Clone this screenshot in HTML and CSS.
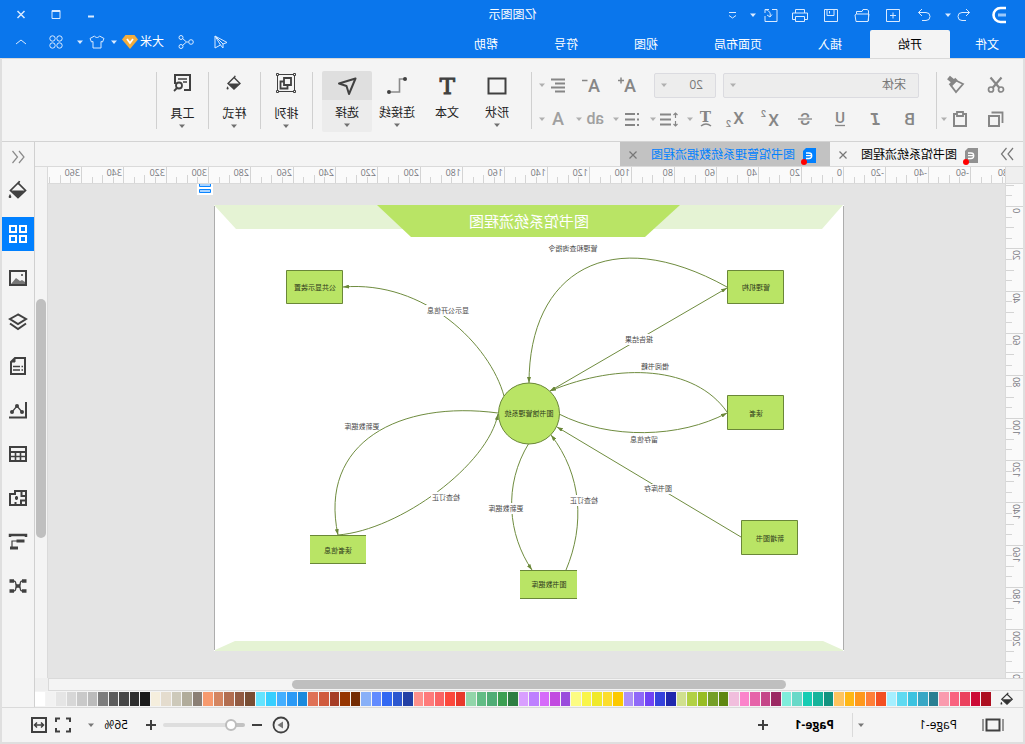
FILE: index.html
```html
<!DOCTYPE html>
<html lang="zh-CN">
<head>
<meta charset="utf-8">
<title>亿图图示</title>
<link rel="stylesheet" href="styles.css">
</head>
<body>
<svg class="sprite" aria-hidden="true">
  <symbol id="caret" viewBox="0 0 8 8"><path d="M1 2.500h6L4 6z" fill="currentColor"/></symbol>
  <symbol id="bucket" viewBox="0 0 20 20"><path d="M8.500 1l1.500 3.500M10 3l7.500 7.500-7.500 7-7.500-7z" fill="none" stroke="currentColor" stroke-width="1.700"/><path d="M3 10.500h14l-7 7z" fill="currentColor"/><path d="M18 14c2 3 1.500 4 0 4s-2-1 0-4z" fill="currentColor"/></symbol>
  <symbol id="doc" viewBox="0 0 13 15"><path d="M0 0h10l3 3v12H0z" fill="currentColor"/><path d="M10 5H7a2.500 2.500 0 0 0 0 5.500h3M5 7.700h5" fill="none" stroke="#fff" stroke-width="1.300"/></symbol>
  <symbol id="close" viewBox="0 0 10 10"><path d="M1.500 1.500l7 7M8.500 1.500l-7 7" stroke="currentColor" stroke-width="1.200"/></symbol>
</svg>

<div class="app">
  <header class="titlebar">
    <div class="title-row">
      <div class="quick">
        <svg class="logo" viewBox="0 0 16 18"><path d="M1 2h5.500a7 7 0 0 1 0 14H1" fill="none" stroke="#fff" stroke-width="2.600"/><path d="M1 9h8" stroke="#9cc8fa" stroke-width="3"/></svg>
        <button class="q first" aria-label="撤销"><svg class="i16" viewBox="0 0 16 16"><path d="M6 2L2.500 5.500 6 9M2.500 5.500H10a4 4 0 0 1 0 8H6"/></svg></button>
        <button class="drop" aria-label="撤销列表"><svg><use href="#caret"/></svg></button>
        <button class="q redo" aria-label="重做"><svg class="i16" viewBox="0 0 16 16"><path d="M10 2l3.500 3.500L10 9M13.500 5.500H6a4 4 0 0 0 0 8h4"/></svg></button>
        <button class="q" aria-label="新建"><svg class="i16" viewBox="0 0 16 16"><path d="M1.500 2.500h13v12h-13zM8 5.500v6M5 8.500h6"/></svg></button>
        <button class="q" aria-label="打开"><svg class="i16" viewBox="0 0 16 16"><path d="M1.500 14V3.500l1.500-1h4l1 2h5.500V7M1 7h12.500l1.500 1-1 6.500H2z"/></svg></button>
        <button class="q" aria-label="保存"><svg class="i16" viewBox="0 0 16 16"><path d="M1.500 2.500h13v12h-13zM5 2.500v6h7v-6M9.500 4v2.500"/></svg></button>
        <button class="q" aria-label="打印"><svg class="i16" viewBox="0 0 16 16"><path d="M3.500 6V2.500h9V6M3.500 12.500h-3V6h15v6.500h-3M3.500 9.500h9v5h-9z"/></svg></button>
        <button class="q export" aria-label="导出"><svg class="i16" viewBox="0 0 16 16"><path d="M7 2.500H2v12h12V9M14 6V2.500h-4M14 2.500c-4 1-6 3-5 7M7 7.500l2 2.500 3-2"/></svg></button>
        <button class="drop" aria-label="导出选项"><svg><use href="#caret"/></svg></button>
        <button class="q more" aria-label="更多"><svg class="i16" viewBox="0 0 16 16"><path d="M5 5.500h7M5 8.500L8.500 11 12 8.500"/></svg></button>
      </div>
      <h1>亿图图示</h1>
      <div class="window">
        <button aria-label="最小化"><svg class="i16" viewBox="0 0 16 16"><path d="M5 9.500h6" stroke-width="2"/></svg></button>
        <button aria-label="最大化"><svg class="i16" viewBox="0 0 16 16"><path d="M4 3.500h8v8H4zM4 4.500h8"/></svg></button>
        <button aria-label="关闭"><svg class="i16" viewBox="0 0 16 16"><path d="M4.500 4l7 7M11.500 4l-7 7" stroke-width="1.500"/></svg></button>
      </div>
    </div>
    <div class="menu-row">
      <nav class="menu">
        <a class="file" href="#file">文件</a><a class="active" href="#home">开始</a><a href="#insert">插入</a><a href="#layout">页面布局</a><a href="#view">视图</a><a href="#symbol">符号</a><a href="#help">帮助</a>
      </nav>
      <div class="account">
        <button class="wide" aria-label="发送"><svg class="i16" viewBox="0 0 16 16"><path d="M14 2L2 8.500l4 1.500zM14 2l-8 8v4l2.500-3M14 2v12l-5.500-3z"/></svg></button>
        <button class="wide" aria-label="分享"><svg class="i16" viewBox="0 0 16 16"><circle cx="3" cy="8" r="2.300"/><circle cx="13" cy="3.500" r="2"/><circle cx="13" cy="12.500" r="2"/><path d="M5.500 8h2l4-3.500M7.500 8l4 3.500"/></svg></button>
        <button class="user">大米<svg class="gem" viewBox="0 0 16 14"><path d="M3.500 0h9L16 4.500 8 14 0 4.500z" fill="#f3ad3d"/><path d="M5 4l3 4 3-4" fill="none" stroke="#fff" stroke-width="1.800"/></svg></button>
        <button class="drop" aria-label="账户选项"><svg><use href="#caret"/></svg></button>
        <button class="shirt" aria-label="主题"><svg class="i16" viewBox="0 0 16 16"><path d="M5.500 2L1 4.500 2.500 8 4 7.500V14h8V7.500l1.500.5L15 4.500 10.500 2c-1 2-4 2-5 0z"/></svg></button>
        <button class="drop" aria-label="主题选项"><svg><use href="#caret"/></svg></button>
        <button class="wide apps" aria-label="应用"><svg class="i16" viewBox="0 0 16 16"><circle cx="4.500" cy="4.500" r="2.700"/><circle cx="11.500" cy="4.500" r="2.700"/><circle cx="4.500" cy="11.500" r="2.700"/><circle cx="11.500" cy="11.500" r="2.700"/></svg></button>
        <button class="wide" aria-label="收起"><svg class="i16" viewBox="0 0 16 16"><path d="M3 10l5-4 5 4"/></svg></button>
      </div>
    </div>
  </header>

  <div class="frame">
    <section class="ribbon" aria-label="开始">
      <div class="tools clipboard">
        <div class="tool-row">
          <button class="t32" aria-label="剪切"><svg class="i18" viewBox="0 0 18 18"><path d="M3.500 1.500l9 10.500M14.500 1.500L5.500 12" stroke-width="2.200"/><circle cx="4" cy="13.500" r="2.500" stroke-width="1.700"/><circle cx="14" cy="13.500" r="2.500" stroke-width="1.700"/></svg></button>
          <button class="t32" aria-label="格式刷"><svg class="i18" viewBox="0 0 18 18"><path d="M2 8l7-3.500 5 5L9 16z" stroke-width="1.800"/><path d="M11 6l5.500-4.500" stroke-width="4.500"/><path d="M8.500 3L15 9.500" stroke-width="3.500"/></svg></button>
        </div>
        <div class="tool-row">
          <button class="t32" aria-label="复制"><svg class="i18" viewBox="0 0 18 18"><path d="M2.500 13V2.500h11" stroke-width="1.800"/><path d="M6 6h10v10H6z" stroke-width="2"/></svg></button>
          <button class="t24" aria-label="粘贴"><svg class="i18" viewBox="0 0 18 18"><path d="M3 4h12v12H3z" stroke-width="2"/><path d="M6 2h6v4H6z" fill="#f4f4f4" stroke-width="1.800"/></svg></button>
          <button class="drop" aria-label="粘贴选项"><svg><use href="#caret"/></svg></button>
        </div>
      </div>
      <span class="sep"></span>
      <div class="tools font">
        <div class="tool-row fields">
          <label class="field family"><select aria-label="字体"><option>宋体</option></select><svg><use href="#caret"/></svg></label>
          <label class="field size"><select aria-label="字号"><option>20</option></select><svg><use href="#caret"/></svg></label>
          <div class="case">
            <button class="t36" aria-label="增大字号"><svg class="i18" viewBox="0 0 18 18"><text class="glyph" x="0" y="16" font-size="18">A</text><path d="M12 4.500h6M15 1.500v6" stroke-width="1.500"/></svg></button>
            <button class="t36" aria-label="减小字号"><svg class="i18" viewBox="0 0 18 18"><text class="glyph" x="0" y="16" font-size="18">A</text><path d="M12.500 4.500H18" stroke-width="1.500"/></svg></button>
          </div>
          <div class="combo"><button class="t24" aria-label="对齐"><svg class="i18" viewBox="0 0 18 18"><path d="M2 3.500h14M2 7.500h10M2 11.500h14M2 15.500h10" stroke-width="1.800"/></svg></button><button class="drop" aria-label="对齐选项"><svg><use href="#caret"/></svg></button></div>
        </div>
        <div class="tool-row styles">
          <button class="t35" aria-label="加粗"><svg class="i18" viewBox="0 0 18 18"><text class="glyph" x="4" y="15" font-size="17">B</text></svg></button>
          <button class="t35" aria-label="斜体"><svg class="i18" viewBox="0 0 18 18"><text class="glyph mono" x="4" y="15" font-size="16">I</text></svg></button>
          <button class="t35" aria-label="下划线"><svg class="i18" viewBox="0 0 18 18"><text class="glyph" x="4" y="13" font-size="15">U</text><path d="M4 15.500h10" stroke-width="1.300"/></svg></button>
          <button class="t35" aria-label="删除线"><svg class="i18" viewBox="0 0 18 18"><text class="glyph" x="4" y="15" font-size="16">S</text><path d="M2 9h14" stroke="#f4f4f4" stroke-width="3"/><path d="M2 9h14" stroke-width="1.300"/></svg></button>
          <button class="t35" aria-label="上标"><svg class="i18" viewBox="0 0 18 18"><text class="glyph" x="0" y="16" font-size="17">X</text><text class="glyph" x="13" y="7" font-size="9">2</text></svg></button>
          <button class="t35" aria-label="下标"><svg class="i18" viewBox="0 0 18 18"><text class="glyph" x="0" y="14" font-size="17">X</text><text class="glyph" x="13" y="17" font-size="9">2</text></svg></button>
          <div class="combos">
            <div class="combo"><button class="t24" aria-label="文字效果"><svg class="i18" viewBox="0 0 18 18"><text class="glyph serif" x="4" y="12" font-size="15">T</text><path d="M4 16q5-4 10 0" stroke-width="1.600"/></svg></button><button class="drop" aria-label="文字效果选项"><svg><use href="#caret"/></svg></button></div>
            <div class="combo"><button class="t24" aria-label="行距"><svg class="i18" viewBox="0 0 18 18"><path d="M7 4.500h11M7 9.500h11M7 14.500h11" stroke-width="1.800"/><path d="M2.500 3v5M.5 5l2-2 2 2M2.500 11v5M.5 14l2 2 2-2" stroke-width="1.200"/></svg></button><button class="drop" aria-label="行距选项"><svg><use href="#caret"/></svg></button></div>
            <div class="combo"><button class="t24" aria-label="项目符号"><svg class="i18" viewBox="0 0 18 18"><path d="M2 4h2M2 9.500h2M2 15h2M6 4h10M6 9.500h10M6 15h10" stroke-width="1.800"/></svg></button><button class="drop" aria-label="项目符号选项"><svg><use href="#caret"/></svg></button></div>
            <div class="combo faint"><button class="t24" aria-label="突出显示"><svg class="i18" viewBox="0 0 18 18"><text class="glyph" x="0" y="14" font-size="16">ab</text></svg></button><button class="drop" aria-label="突出显示选项"><svg><use href="#caret"/></svg></button></div>
            <div class="combo faint"><button class="t24" aria-label="字体颜色"><svg class="i18" viewBox="0 0 18 18"><text class="glyph" x="3" y="15" font-size="18">A</text></svg></button><button class="drop" aria-label="字体颜色选项"><svg><use href="#caret"/></svg></button></div>
          </div>
        </div>
      </div>
      <span class="sep"></span>
      <div class="bigs">
        <button class="big"><svg class="i24" viewBox="0 0 24 24"><path d="M3.500 4.500h17v15h-17z" stroke-width="2"/></svg><span>形状</span><svg class="car"><use href="#caret"/></svg></button>
        <button class="big"><svg class="i24" viewBox="0 0 24 24"><text class="glyph serif thick" x="4" y="20" font-size="23">T</text></svg><span>文本</span></button>
        <button class="big"><svg class="i24" viewBox="0 0 24 24"><path d="M5 5h4.500v13H18" stroke="#8a8a8a" stroke-width="1.600"/><circle cx="4" cy="5" r="2" class="dot"/><circle cx="20" cy="18" r="2" class="dot"/></svg><span>连接线</span><svg class="car"><use href="#caret"/></svg></button>
        <button class="big on"><svg class="i24" viewBox="0 0 24 24"><path d="M3.500 4.500L20 9.500l-7.500 2.500L10 20z" stroke-width="2" stroke-linejoin="round"/></svg><span>选择</span><svg class="car"><use href="#caret"/></svg></button>
      </div>
      <span class="sep"></span>
      <button class="group"><svg class="i24" viewBox="0 0 24 24"><path d="M3.500 3.500h17v17h-17z" stroke-width="1"/><path d="M7 7h7v7H7zM14.500 10.500H17.500V17.500h-7v-3" stroke-width="1.800"/><path class="hollow" d="M2.500 2.500h2v2h-2zM19.500 2.500h2v2h-2zM2.500 19.500h2v2h-2zM19.500 19.500h2v2h-2z" stroke-width="1"/></svg><span>排列</span><svg class="car"><use href="#caret"/></svg></button>
      <span class="sep"></span>
      <button class="group"><svg class="i16 paint"><use href="#bucket"/></svg><span>样式</span><svg class="car"><use href="#caret"/></svg></button>
      <span class="sep"></span>
      <button class="group"><svg class="i20" viewBox="0 0 20 20"><path d="M8 17H2V2h15v9" stroke-width="2"/><path d="M5 6h9M5 9h4" stroke-width="1.500"/><circle cx="13" cy="12.500" r="3" stroke-width="1.800"/><path d="M15 15l3 3" stroke-width="1.800"/></svg><span>工具</span><svg class="car"><use href="#caret"/></svg></button>
      <span class="sep"></span>
    </section>

    <div class="work">
      <main>
        <div class="doc-tabs">
          <button class="expand" aria-label="展开"><svg class="i16" viewBox="0 0 16 16"><path d="M2 2l5 6-5 6M8.500 2l5 6-5 6" stroke-width="1.200"/></svg></button>
          <div class="doc-tab"><span class="file-icon"><svg><use href="#doc"/></svg></span><a href="#doc1">图书馆系统流程图</a><button aria-label="关闭标签"><svg><use href="#close"/></svg></button></div>
          <div class="doc-tab current"><span class="file-icon"><svg><use href="#doc"/></svg></span><a href="#doc2">图书馆管理系统数据流程图</a><button aria-label="关闭标签"><svg><use href="#close"/></svg></button></div>
        </div>
        <div class="sheet">
          <div class="corner"></div>
          <svg class="ruler-h" id="ruler-h"></svg>
          <div class="scroll-v"><i></i></div>
          <svg class="ruler-v" id="ruler-v"></svg>
          <div class="canvas">
            <svg class="page" viewBox="181 205 630 446" role="img" aria-label="图书馆系统流程图">
              <defs><marker id="arrow" viewBox="0 0 6 4" refX="6" refY="2" markerWidth="6" markerHeight="4" orient="auto-start-reverse"><path d="M0 0l6 2-6 2z" fill="#6a8738"/></marker></defs>
              <path d="M181 205h630v446h-630z" fill="#fff"/>
              <path d="M181.500 206v444M810.500 206v444" stroke="#adadad"/>
              <path d="M182 205h629l-22 24H203z" fill="#e5f3d4"/>
              <path d="M345 205h303l-34 32H380z" fill="#b9e465"/>
              <path d="M182 650l20-9h588l20 9v1H182z" fill="#e5f3d4"/>
              <text class="heading" x="496" y="227">图书馆系统流程图</text>
              <g class="edges">
                <path d="M298 287C415 222 496 272 496 383" marker-end="url(#arrow)"/>
                <path d="M298 288L475 391" marker-start="url(#arrow)" marker-end="url(#arrow)"/>
                <path d="M298 412C330 366 405 362 475 391" marker-end="url(#arrow)"/>
                <path d="M466 414C415 440 345 438 298 413" marker-end="url(#arrow)"/>
                <path d="M284 537L468 427" marker-end="url(#arrow)"/>
                <path d="M496 443C522 485 517 535 493 570" marker-end="url(#arrow)"/>
                <path d="M459 570C440 525 443 475 474 435" marker-end="url(#arrow)"/>
                <path d="M527 413C625 400 707 442 687 535" marker-end="url(#arrow)"/>
                <path d="M687 535C625 530 537 465 527 414" marker-end="url(#arrow)"/>
                <path d="M521 396C535 345 600 280 682 287" marker-end="url(#arrow)"/>
              </g>
              <g class="shapes">
                <path d="M241.500 270.500h56v33h-56zM241.500 395.500h56v34h-56zM227.500 520.500h56v34h-56zM682.500 270.500h56v33h-56z"/>
                <circle cx="496" cy="413.500" r="30.500"/>
                <path class="bare" d="M659 535h56v29h-56zM448 570h57v29h-57z"/>
                <path d="M659 535.500h56M659 563.500h56M448 570.500h57M448 598.500h57"/>
              </g>
              <g fill="#fff"><path d="M555 305h44v11h-44zM371 334h30v11h-30zM353 484h30v10h-30zM500 503h38v11h-38zM564 492h30v11h-30zM426 495h30v11h-30z"/></g>
              <g class="labels">
                <text x="452" y="251">管理和查询指令</text>
                <text x="577" y="313">显示公开信息</text>
                <text x="386" y="342">报告结果</text>
                <text x="370" y="369">借阅书籍</text>
                <text x="381" y="442">留存信息</text>
                <text x="367" y="491">图书库存</text>
                <text x="663" y="429">更新数据库</text>
                <text x="519" y="511">更新数据库</text>
                <text x="579" y="500">检查订正</text>
                <text x="441" y="503">检查订正</text>
              </g>
              <g class="labels node">
                <text x="269" y="290">管理机构</text>
                <text x="269" y="416">读者</text>
                <text x="255" y="541">新增图书</text>
                <text x="710" y="290">公共显示装置</text>
                <text x="496" y="416">图书馆管理系统</text>
                <text x="687" y="553">读者信息</text>
                <text x="476" y="587">图书数据库</text>
              </g>
            </svg>
            <svg class="handle" viewBox="0 0 16 11"><path d="M0 0h16v11H0z" fill="#fff"/><path d="M2.500-2h11v4.500h-11zM2.500 5.500h11v3h-11z" fill="#a8d3ff" stroke="#0a84ff"/></svg>
          </div>
        </div>
        <div class="scroll-h"><div class="track"><i></i></div><div class="end"></div></div>
        <div class="palette"><button aria-label="填充"><svg><use href="#bucket"/></svg></button><div class="swatches" id="swatches"></div></div>
      </main>
      <aside class="side">
        <button class="fold" aria-label="收起面板"><svg class="i16" viewBox="0 0 16 16"><path d="M7 2L2 8l5 6M13.500 2l-5 6 5 6" stroke="#8a8a8a" stroke-width="1.200"/></svg></button>
        <button aria-label="样式"><svg><use href="#bucket"/></svg></button>
        <button class="on" aria-label="符号"><svg viewBox="0 0 20 20"><path d="M2 2h6v6H2zM12 2h6v6h-6zM2 12h6v6H2zM12 12h6v6h-6z" stroke-width="2"/></svg></button>
        <button aria-label="图片"><svg viewBox="0 0 20 20"><path d="M2 3h16v14H2z" stroke-width="2"/><path d="M3 16v-2l3-2 2 1 4-3 5 6z" fill="#777" stroke="none"/><circle cx="6" cy="7" r="1" class="dot"/></svg></button>
        <button aria-label="图层"><svg viewBox="0 0 20 20"><path d="M10 2.500l8 4.500-8 5-8-5zM2 11.500l8 5.500 8-5.500" stroke-width="2"/></svg></button>
        <button aria-label="注释"><svg viewBox="0 0 20 20"><path d="M3 2h10l4 4v12H3z" stroke-width="2"/><path d="M5 10.500h1.500M8 10.500h7M5 14h1.500M8 14h7" stroke-width="1.500"/><path d="M13 2l4 4h-4z" fill="currentColor"/></svg></button>
        <button aria-label="图表"><svg viewBox="0 0 20 20"><path d="M2 2v15.500h17" stroke-width="2"/><path d="M6 12l5-6 5 6" stroke-width="1.200"/><circle cx="6" cy="12" r="2" class="dot"/><circle cx="11" cy="6" r="2" class="dot"/><circle cx="16" cy="12" r="2" class="dot"/></svg></button>
        <button aria-label="表格"><svg viewBox="0 0 20 20"><path d="M2 3h16v14H2zM2 8h16" stroke-width="2"/><path d="M2 12.500h16M7.500 8v9M12.500 8v9" stroke-width="1.600"/></svg></button>
        <button aria-label="平面图"><svg viewBox="0 0 20 20"><path d="M2 3h11v3h5v11H2zM2 8h4.500V3M2 12.500h5V17M12.500 14v3M13 10h-3M11.500 8v4" stroke-width="2"/></svg></button>
        <button aria-label="甘特图"><svg viewBox="0 0 20 20"><path d="M2 5V3h16v2" stroke-width="2.500"/><path d="M3.500 9h8M10 16h8" stroke-width="3"/><path d="M11 9h5v6" stroke-width="1.200"/></svg></button>
        <button aria-label="思维导图"><svg viewBox="0 0 20 20"><path d="M4 5c6-1 2 5 6 5s0-6 6-5M4 15c6 1 2-5 6-5s0 6 6 5" stroke-width="1.300"/><path d="M1.500 5H6M14 5h4.500M1.500 15H6M14 15h4.500M7.500 10h5" stroke-width="3.500"/></svg></button>
      </aside>
    </div>

    <footer class="status">
      <button class="pages" aria-label="页面视图"><svg viewBox="0 0 24 16"><path d="M5.500 2.500h13v11h-13z" stroke-width="2"/><path d="M2 2v12M22 2v12" stroke="#777" stroke-width="1.500"/></svg></button>
      <label class="page-pick"><select aria-label="页面"><option>Page-1</option></select><svg><use href="#caret"/></svg></label>
      <span class="bar"></span>
      <a class="page-tab" href="#page1">Page-1</a>
      <button class="s24 add" aria-label="新增页面"><svg class="i16" viewBox="0 0 16 16"><path d="M3 8h10M8 3v10" stroke-width="2"/></svg></button>
      <div class="zoom">
        <button class="s24" aria-label="放映"><svg class="i18" viewBox="0 0 18 18"><circle cx="9" cy="9" r="7.500" stroke-width="1.800"/><path d="M7 5.500l5.500 3.500L7 12.500z" fill="#777" stroke="none"/></svg></button>
        <button class="s24" aria-label="缩小"><svg class="i16" viewBox="0 0 16 16"><path d="M3 8h10" stroke-width="2"/></svg></button>
        <input type="range" min="0" max="100" value="11" aria-label="缩放">
        <button class="s24" aria-label="放大"><svg class="i16" viewBox="0 0 16 16"><path d="M3 8h10M8 3v10" stroke-width="2"/></svg></button>
        <label class="zoom-pick"><select aria-label="缩放比例"><option>56%</option></select><svg><use href="#caret"/></svg></label>
        <button class="s24" aria-label="全屏"><svg class="i18" viewBox="0 0 18 18"><path d="M2 6V2.500h4M12 2.500h4V6M2 12v3.500h4M12 15.500h4V12" stroke-width="2"/></svg></button>
        <button class="s24" aria-label="适合宽度"><svg class="i18" viewBox="0 0 18 18"><path d="M2 2h14v14H2z" stroke-width="2"/><path d="M5 9h8M7 6.500L4.500 9 7 11.500M11 6.500L13.500 9 11 11.500" stroke-width="1.500"/></svg></button>
      </div>
    </footer>
  </div>
</div>
<script src="script.js"></script>
</body>
</html>
```

FILE: styles.css
```css
* { box-sizing: border-box; }

body {
  margin: 0;
  font: 12px/16px "Open Sans", "Noto Sans CJK SC", sans-serif;
  color: #000;
}

button, select, input { font: inherit; color: inherit; margin: 0; }
button { border: 0; padding: 0; background: none; display: flex; align-items: center; justify-content: center; }
select { appearance: none; border: 0; background: none; padding: 0; outline: 0; width: 100%; }
a { color: inherit; text-decoration: none; }
svg { display: block; flex: none; fill: none; stroke: currentColor; }
svg use, .glyph { stroke: none; }
.sprite { position: absolute; width: 0; height: 0; }
.sprite [fill="currentColor"] { stroke: none; }
.dot { fill: currentColor; stroke: none; }
.hollow { fill: #f4f4f4; }
.glyph { fill: currentColor; font-family: Roboto, sans-serif; font-weight: 500; }
.glyph.serif { font-family: "DejaVu Serif", serif; font-weight: 700; }
.glyph.thick { font-weight: 400; stroke: currentColor; stroke-width: 1; }
.glyph.mono { font-family: "DejaVu Sans Mono", monospace; font-weight: 700; font-style: oblique; }
.i16 { width: 16px; height: 16px; }
.i18 { width: 18px; height: 18px; }
.i20 { width: 20px; height: 20px; }
.i24 { width: 24px; height: 24px; }
.i18, .i24 { overflow: visible; }

/* The whole window is shown as a mirror image. */
.app {
  display: flex;
  flex-direction: column;
  height: 100vh;
  overflow: hidden;
  transform: scaleX(-1);
  background: #f4f4f4;
}

.drop { width: 8px; height: 24px; }
.drop svg { width: 8px; height: 8px; }

/* title bar */
.titlebar { background: #0a76ec; color: #fff; }
.title-row { display: grid; grid-template-columns: 1fr auto 1fr; height: 30px; align-items: center; }
.title-row h1 { margin: 0; font-size: 12px; font-weight: 400; }
.quick, .window, .account, .menu { display: flex; align-items: center; }
.quick { padding-left: 18px; }
.titlebar button { color: #d9eaff; height: 24px; }
.logo { width: 16px; height: 18px; }
.q { width: 31px; }
.q.first { width: 24px; margin-left: 15px; }
.q.redo { margin-left: 4px; }
.q.export { width: 28px; }
.q.more { width: 16px; margin-left: 8px; }
.window { justify-content: flex-end; padding-right: 4px; }
.window button, .wide { width: 35px; }
.menu-row { display: flex; justify-content: space-between; height: 28px; }
.menu { padding-left: 1px; align-items: stretch; }
.menu a { padding: 1px 28px 0; line-height: 27px; }
.menu a.file { padding: 1px 25px 0; }
.menu a.active { background: #f4f4f4; color: #000; border-radius: 2px 2px 0 0; }
.account { padding: 0 4px 4px 0; }
.titlebar .user { color: #fff; gap: 2px; margin: 0 4px; }
.gem { width: 16px; height: 14px; stroke: none; }
.shirt { width: 22px; margin: 0 2px; }
.apps { margin-left: 2px; }

/* window frame below the title bar */
.frame {
  flex: 1;
  min-height: 0;
  display: flex;
  flex-direction: column;
  border: solid #dfdfdf;
  border-width: 0 2px 2px;
}

/* ribbon */
.ribbon {
  display: flex;
  align-items: flex-start;
  height: 84px;
  border-top: 1px solid #d9d9d9;
  border-bottom: 1px solid #d3d3d3;
  color: #404040;
}
.sep { width: 1px; height: 57px; margin-top: 13px; background: #d0d0d0; }
.tools { padding-top: 9px; color: #868686; }
.tool-row { display: flex; align-items: center; height: 34px; }
.clipboard { width: 86px; padding-left: 11px; }
.clipboard .tool-row { gap: 8px; }
.clipboard .drop { margin-left: -8px; }
.font { width: 404px; padding-right: 6px; }
.tool-row button { height: 28px; }
.tools .drop, .field svg { color: #b0b0b0; }
.t24 { width: 24px; }
.t32 { width: 32px; }
.t35 { width: 35px; }
.t36 { width: 36px; }
.fields { padding-left: 17px; }
.styles { padding-left: 8px; }
.field {
  display: flex;
  align-items: center;
  height: 25px;
  padding: 0 5px 0 12px;
  border: 1px solid #dbdbe0;
  border-radius: 2px;
  background: #ededed;
  color: #777;
}
.field svg { width: 8px; height: 8px; }
.family { width: 196px; margin-right: 7px; }
.size { width: 62px; }
.case { display: flex; margin-left: auto; margin-right: 3px; }
.combo { display: flex; align-items: center; }
.combos { display: flex; gap: 5px; margin-left: auto; }
.faint { color: #a0a0a0; }
.bigs { display: flex; padding: 12px 9px 0; }
.big, .group { flex-direction: column; justify-content: flex-start; }
.big { width: 50px; height: 61px; padding-top: 3px; }
.big span { margin-top: 7px; }
.ribbon span { color: #222; }
.car { width: 8px; height: 8px; color: #707070; }
.big.on { background: linear-gradient(#dfdfdf 29px, #ececec 29px); border-radius: 2px; }
.group { width: 51px; height: 80px; padding-top: 12px; }
.group .i20 { margin: 2px 0; }
.group .paint { margin: 4px 0; }
.group span { margin: 11px 0 0; }

/* work area */
.work { flex: 1; min-height: 0; display: flex; }
main { flex: 1; min-width: 0; display: flex; flex-direction: column; }

.doc-tabs { display: flex; height: 24px; }
.expand { width: 32px; color: #777; }
.doc-tab { display: flex; align-items: center; padding: 2px 8px 0 13px; }
.doc-tab.current { background: #c2c2c2; color: #0080ff; padding-left: 14px; }
.file-icon { position: relative; width: 13px; height: 15px; color: #919191; }
.current .file-icon { color: #0080ff; }
.file-icon svg { width: 13px; height: 15px; }
.file-icon::after {
  content: "";
  position: absolute;
  right: -2px;
  bottom: -2px;
  width: 6px;
  height: 6px;
  border-radius: 50%;
  background: #f00;
}
.doc-tab a { margin: 0 13px 0 8px; }
.doc-tab button svg { width: 10px; height: 10px; color: #777; }

.sheet {
  flex: 1;
  min-height: 0;
  display: grid;
  grid-template: 18px minmax(0, 1fr) / 18px minmax(0, 1fr) 13px;
}
.corner { border: solid #dadada; border-width: 1px 1px 1px 0; background: #efefef; }
.ruler-h { width: 100%; height: 18px; border: solid #dadada; border-width: 1px 0; background: #fafafa; }
.ruler-v { width: 18px; height: 100%; border-right: 1px solid #dadada; background: #fafafa; grid-column: 1; grid-row: 2; }
.ruler-h, .ruler-v { overflow: hidden; stroke: #d4d4d4; }
.ruler-h text, .ruler-v text { stroke: none; fill: #77777d; font-size: 9px; }
.scroll-v {
  grid-column: 3;
  grid-row: 1 / 3;
  border: solid #dadada;
  border-width: 1px 0 0 1px;
  padding: 132px 1px 0;
}
.scroll-v i { display: block; height: 63%; border-radius: 5px; background: #bfbfbf; }
.canvas { position: relative; overflow: hidden; background: #e4e4e4; }
.page { position: absolute; left: 161px; top: 21px; width: 630px; height: 446px; stroke: none; }
.handle { position: absolute; left: 792px; top: 0; width: 16px; height: 11px; stroke: none; }
.heading { fill: #fff; font-size: 15px; text-anchor: middle; }
.edges { fill: none; stroke: #6f8c3f; stroke-width: 1; }
.shapes { fill: #b9e465; stroke: #6a8738; stroke-width: 1; }
.shapes .bare { stroke: none; }
.labels { fill: #4a4a4a; font-size: 7px; text-anchor: middle; }
.labels.node { fill: #2f3a1c; }

.scroll-h { display: flex; height: 13px; }
.track { flex: 1; border: 1px solid #dadada; border-left: 0; padding: 1px 0 1px 237px; }
.track i { display: block; width: 67%; height: 9px; border-radius: 5px; background: #bfbfbf; }
.end { width: 13px; background: #efefef; }
.palette { display: flex; height: 16px; padding: 1px 0; }
.palette button { width: 32px; color: #333; }
.palette button svg { width: 14px; height: 14px; }
.swatches { flex: 1; display: flex; gap: 1px; }
.swatches i { flex: 1; }

.side { width: 33px; border-left: 1px solid #d0d0d0; display: flex; flex-direction: column; gap: 10px; color: #404040; }
.side button { height: 34px; }
.side svg { width: 20px; height: 20px; }
.side .fold { height: 21px; padding-top: 9px; }
.side .fold svg { width: 16px; height: 16px; }
.side .on { background: #0080ff; color: #fff; }

/* status bar */
.status { display: flex; align-items: center; height: 35px; border-top: 1px solid #dadada; color: #404040; }
.status label { display: flex; align-items: center; color: #000; }
.status label svg { width: 8px; height: 8px; color: #777; }
.pages { width: 28px; margin: 0 22px 0 16px; }
.pages svg { width: 24px; height: 16px; }
.page-pick { width: 100px; }
.bar { width: 1px; height: 24px; margin-left: 4px; background: #dadada; }
.page-tab { margin: 0 20px 0 18px; font-weight: 700; color: #000; }
.s24 { width: 24px; height: 24px; }
.zoom { display: flex; align-items: center; margin-left: auto; padding-right: 25px; }
.zoom-pick { width: 41px; margin: 0 12px 0 11px; }
.zoom input {
  appearance: none;
  width: 82px;
  height: 4px;
  border-radius: 2px;
  background: linear-gradient(to right, #c2c2c2 14px, #dedede 14px);
}
.zoom input::-webkit-slider-thumb {
  appearance: none;
  width: 12px;
  height: 12px;
  border: 2px solid #bdbdbd;
  border-radius: 50%;
  background: #fff;
}
```

FILE: script.js
```js
// Rulers: a labelled line every 20 mm, shorter ticks every 5 mm.
const STEP = 127 / 3;

function drawRuler(svg, vertical, origin, length) {
  let out = "";
  const first = Math.floor(-origin / STEP);
  for (let n = first; origin + n * STEP < length; n++) {
    for (let q = 0; q < 4; q++) {
      const p = Math.round(origin + (n + q / 4) * STEP) + 0.5;
      const size = q === 0 ? 18 : q === 2 ? 9 : 7;
      out += vertical
        ? `<path d="M18 ${p}h-${size}"/>`
        : `<path d="M${p} 17v-${size}"/>`;
    }
    const p = Math.round(origin + n * STEP) + 2;
    if (vertical && p < 0) continue;
    out += vertical
      ? `<text transform="translate(10 ${p}) rotate(-90)" text-anchor="end">${n * 20}</text>`
      : `<text x="${p}" y="9">${n * 20}</text>`;
  }
  svg.innerHTML = out;
}

function drawRulers() {
  const h = document.getElementById("ruler-h");
  const v = document.getElementById("ruler-v");
  drawRuler(h, false, 161, h.getBoundingClientRect().width);
  drawRuler(v, true, 22, v.getBoundingClientRect().height);
}
drawRulers();
addEventListener("resize", drawRulers);

const colors = (
  "AD0F20 CC0A35 EB425E F9637F FA9BAE 2A7F92 38A7C5 3DC3E0 60DAF1 A6EFFF " +
  "F35022 FF7F38 FF981C FFB716 FFC45F 139380 16B49B 17CCB3 68D9C8 80EDDB " +
  "9B2862 C54688 E663A9 FB84CB F1BEDD 5F8711 759F27 98BD24 B2D145 D0E08E " +
  "2028AD 3542DD 7043F5 8F69F8 AD91F8 FCC900 FCDD2C F0E92B F9F54B FCFC83 " +
  "9A4CDC C24AE0 D66BFA BE80FF D99FFF 2E7E42 3C9F52 50AD76 62BC85 92D5AA " +
  "E8382B FC483C FA6464 FE7A7A FE908B 2340A5 2C57CF 3268F2 628BFF 88B0F8 " +
  "742C03 963500 A63D26 D05B3E DF7156 1A8ADD 2B9AF6 44AFFF 37CFFF 64E4FF " +
  "784D33 925B42 B26E50 D48560 F79A6E 8B7F75 B1AC9B CDC9BA E4DCCE F5EEDD " +
  "1A1A1A 2E2E2E 464646 5B5B5B 7D7D7D BBBBBB C9C9C9 D7D7D7 E5E5E5 F2F2F2 FFFFFF"
).split(" ");
document.getElementById("swatches").innerHTML = colors
  .map((c) => `<i style="background:#${c}"></i>`)
  .join("");
```
